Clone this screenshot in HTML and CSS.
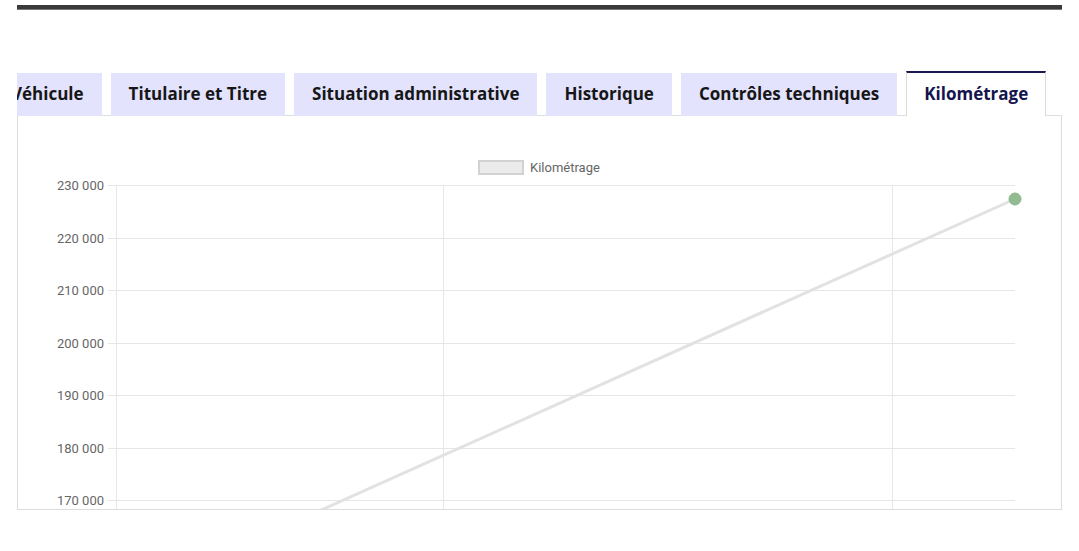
FILE: index.html
```html
<!DOCTYPE html>
<html lang="fr">
<head>
<meta charset="utf-8">
<title>Kilométrage</title>
<link rel="stylesheet" href="styles.css">
</head>
<body>
<div class="page">
  <div class="topbar"></div>
  <div class="tabs">
    <div class="tablist">
      <div class="tab first">Véhicule</div>
      <div class="tab">Titulaire et Titre</div>
      <div class="tab">Situation administrative</div>
      <div class="tab">Historique</div>
      <div class="tab">Contrôles techniques</div>
      <div class="tab active">Kilométrage</div>
    </div>
  </div>
  <div class="panel">
    <svg class="chart" width="1043" height="393" viewBox="18 116 1043 393" xmlns="http://www.w3.org/2000/svg">
      <g class="legend">
        <rect x="479" y="161" width="44" height="13" fill="#ebebeb" stroke="#d2d2d2" stroke-width="2"/>
        <text x="530" y="172" class="lbl">Kilométrage</text>
      </g>
      <g stroke="#e6e6e6" stroke-width="1">
        <line x1="108" y1="185.5" x2="1015" y2="185.5"/>
        <line x1="108" y1="238.5" x2="1015" y2="238.5"/>
        <line x1="108" y1="290.5" x2="1015" y2="290.5"/>
        <line x1="108" y1="343.5" x2="1015" y2="343.5"/>
        <line x1="108" y1="395.5" x2="1015" y2="395.5"/>
        <line x1="108" y1="448.5" x2="1015" y2="448.5"/>
        <line x1="108" y1="500.5" x2="1015" y2="500.5"/>
        <line x1="116.5" y1="185" x2="116.5" y2="520"/>
        <line x1="443.5" y1="185" x2="443.5" y2="520"/>
        <line x1="892.5" y1="185" x2="892.5" y2="520"/>
      </g>
      <g class="ylab">
        <text x="104" y="189.5">230 000</text>
        <text x="104" y="242.5">220 000</text>
        <text x="104" y="294.5">210 000</text>
        <text x="104" y="347.5">200 000</text>
        <text x="104" y="399.5">190 000</text>
        <text x="104" y="452.5">180 000</text>
        <text x="104" y="504.5">170 000</text>
      </g>
      <line x1="290" y1="524" x2="1015" y2="199" stroke="#e2e2e2" stroke-width="3"/>
      <circle cx="1015" cy="199" r="6" fill="#93bb92" stroke="#8cb68b" stroke-width="1"/>
    </svg>
  </div>
</div>
</body>
</html>
```
FILE: styles.css
```css
html, body {
  margin: 0;
  padding: 0;
  background: #ffffff;
}
.page {
  padding: 5px 17px 0 17px;
  font-family: "Open Sans", Lato, sans-serif;
}
.topbar {
  height: 4px;
  background: #3a3a3a;
  border-bottom: 1px solid #777;
}
.tabs {
  margin-top: 61px;
  overflow: hidden;
  padding-top: 2px;
}
.tablist {
  display: flex;
  gap: 9px;
  margin-left: -24px;
  white-space: nowrap;
}
.tab {
  flex: none;
  height: 43px;
  padding: 0 18px 3px 18px;
  display: flex;
  align-items: center;
  background: #e3e3fd;
  color: #161616;
  font-size: 17px;
  font-weight: 700;
  box-sizing: border-box;
}
.tab.active {
  background: #ffffff;
  color: #14144e;
  height: 46px;
  margin-top: -2px;
  padding: 0 17px 3px 17px;
  border-top: 2px solid #1a1a50;
  border-left: 1px solid #dcdcdc;
  border-right: 1px solid #dcdcdc;
  position: relative;
  z-index: 1;
  margin-bottom: -1px;
}
.panel {
  border: 1px solid #dddddd;
  overflow: hidden;
  margin-top: -1px;
  box-sizing: border-box;
  height: 395px;
}
.chart {
  display: block;
}
.chart text {
  font-family: Roboto, "Liberation Sans", sans-serif;
  font-size: 13px;
  fill: #666666;
}
.ylab text {
  text-anchor: end;
}
```
